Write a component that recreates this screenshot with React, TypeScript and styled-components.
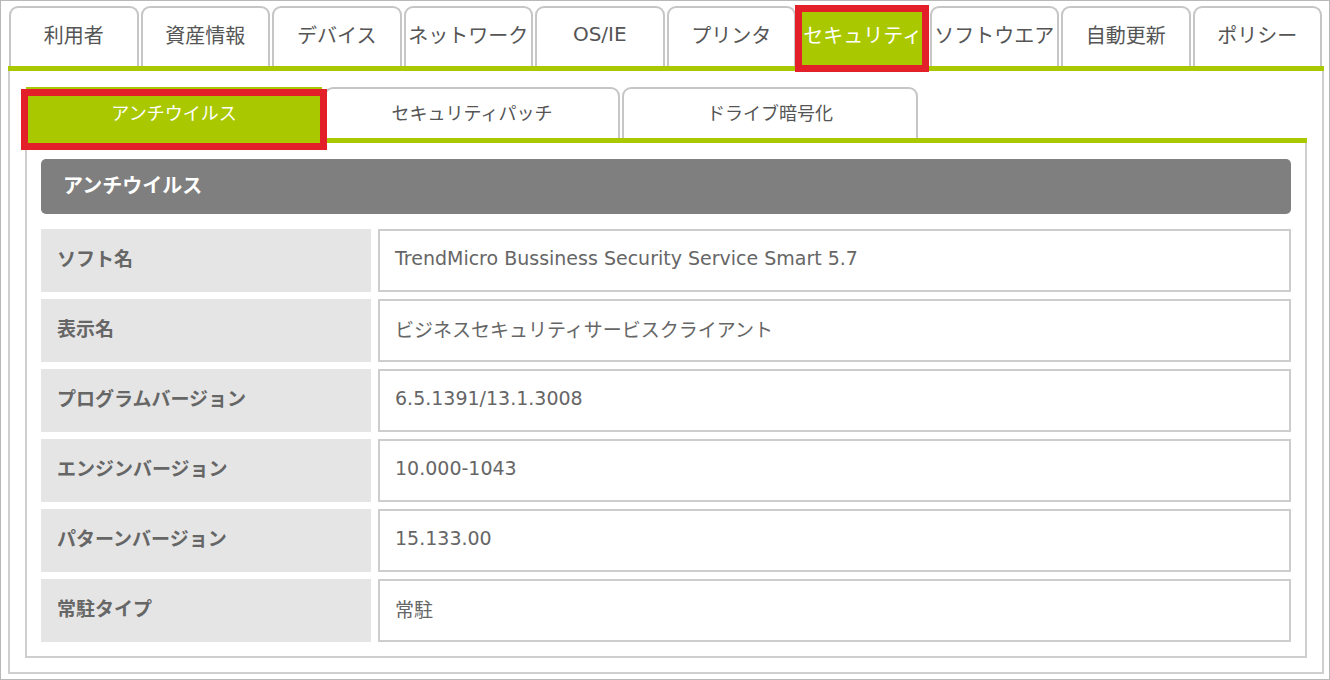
import React from 'react';
import styled, { createGlobalStyle } from 'styled-components';

const GREEN = '#a9c800';
const RED = '#e3202a';

const GlobalStyle = createGlobalStyle`
  html, body { margin: 0; padding: 0; background: #fff; }
  body { font-family: "DejaVu Sans", "Noto Sans CJK JP", sans-serif; }
  * { box-sizing: border-box; }
`;

const Frame = styled.div`
  width: 1330px;
  height: 680px;
  border: 1px solid #b8b8b8;
  padding: 5px 5px 5px 7px;
  display: flex;
  flex-direction: column;
`;

const MainTabs = styled.div`
  display: flex;
  gap: 2px;
  padding: 0 2px 0 1px;
  height: 60px;
  flex-shrink: 0;
`;

// red annotation box drawn over the highlighted tab
const Highlight = styled.span<{ $t: number; $r: number; $b: number; $l: number }>`
  position: absolute;
  top: ${p => p.$t}px;
  right: ${p => p.$r}px;
  bottom: ${p => p.$b}px;
  left: ${p => p.$l}px;
  border: 7px solid ${RED};
  pointer-events: none;
  z-index: 3;
`;

const MainTab = styled.div<{ $active?: boolean }>`
  flex: 1;
  position: relative;
  display: flex;
  align-items: center;
  justify-content: center;
  padding-bottom: 6px;
  border: 2px solid ${p => (p.$active ? GREEN : '#c6c6c6')};
  border-bottom: none;
  border-radius: 9px 9px 0 0;
  background: ${p => (p.$active ? GREEN : '#fff')};
  color: ${p => (p.$active ? '#fff' : '#555')};
  font-size: 20px;
  white-space: nowrap;
`;

const GreenRule = styled.div`
  height: 5px;
  background: ${GREEN};
  flex-shrink: 0;
`;

const ContentBox = styled.div`
  flex: 1;
  border: 2px solid #cfcfcf;
  border-top: none;
  padding: 16px 15px 14px 15px;
  display: flex;
  flex-direction: column;
`;

const SubTabs = styled.div`
  display: flex;
  gap: 2px;
  height: 51px;
  padding-left: 1px;
  flex-shrink: 0;
`;

const SubTab = styled.div<{ $active?: boolean }>`
  width: 296px;
  position: relative;
  display: flex;
  align-items: center;
  justify-content: center;
  padding-bottom: 4px;
  border: 2px solid ${p => (p.$active ? GREEN : '#c6c6c6')};
  border-bottom: none;
  border-radius: ${p => (p.$active ? '0' : '9px 9px 0 0')};
  background: ${p => (p.$active ? GREEN : '#fff')};
  color: ${p => (p.$active ? '#fff' : '#555')};
  font-size: 18px;
`;

const Panel = styled.div`
  flex: 1;
  border: 2px solid #cfcfcf;
  border-top: none;
  padding: 16px 14px 13px 14px;
  display: flex;
  flex-direction: column;
  gap: 15px;
`;

const SectionHeader = styled.div`
  height: 55px;
  flex-shrink: 0;
  background: #7f7f7f;
  border-radius: 5px;
  color: #fff;
  font-size: 20px;
  font-weight: bold;
  display: flex;
  align-items: center;
  padding: 0 0 4px 22px;
`;

const Rows = styled.div`
  display: flex;
  flex-direction: column;
  gap: 7px;
`;

const Row = styled.div`
  display: grid;
  grid-template-columns: 330px 1fr;
  gap: 7px;
  height: 63px;
`;

const Label = styled.div`
  background: #e5e5e5;
  color: #666;
  font-size: 19px;
  font-weight: bold;
  display: flex;
  align-items: center;
  padding: 0 0 6px 16px;
`;

const Value = styled.div`
  border: 2px solid #cdcdcd;
  color: #666;
  font-size: 19px;
  display: flex;
  align-items: center;
  padding: 0 0 5px 15px;
`;

const mainTabs = ['利用者', '資産情報', 'デバイス', 'ネットワーク', 'OS/IE', 'プリンタ', 'セキュリティ', 'ソフトウエア', '自動更新', 'ポリシー'];
const subTabs = ['アンチウイルス', 'セキュリティパッチ', 'ドライブ暗号化'];
const rows: [string, string][] = [
  ['ソフト名', 'TrendMicro Bussiness Security Service Smart 5.7'],
  ['表示名', 'ビジネスセキュリティサービスクライアント'],
  ['プログラムバージョン', '6.5.1391/13.1.3008'],
  ['エンジンバージョン', '10.000-1043'],
  ['パターンバージョン', '15.133.00'],
  ['常駐タイプ', '常駐'],
];

export default function App() {
  return (
    <>
      <GlobalStyle />
      <Frame>
        <MainTabs>
          {mainTabs.map(t => {
            const active = t === 'セキュリティ';
            return (
              <MainTab key={t} $active={active}>
                {t}
                {active && <Highlight $t={-3} $r={-3} $b={-6} $l={-5} />}
              </MainTab>
            );
          })}
        </MainTabs>
        <GreenRule />
        <ContentBox>
          <SubTabs>
            {subTabs.map((t, i) => (
              <SubTab key={t} $active={i === 0}>
                {t}
                {i === 0 && <Highlight $t={0} $r={-7} $b={-12} $l={-7} />}
              </SubTab>
            ))}
          </SubTabs>
          <GreenRule />
          <Panel>
            <SectionHeader>アンチウイルス</SectionHeader>
            <Rows>
              {rows.map(([k, v]) => (
                <Row key={k}>
                  <Label>{k}</Label>
                  <Value>{v}</Value>
                </Row>
              ))}
            </Rows>
          </Panel>
        </ContentBox>
      </Frame>
    </>
  );
}
